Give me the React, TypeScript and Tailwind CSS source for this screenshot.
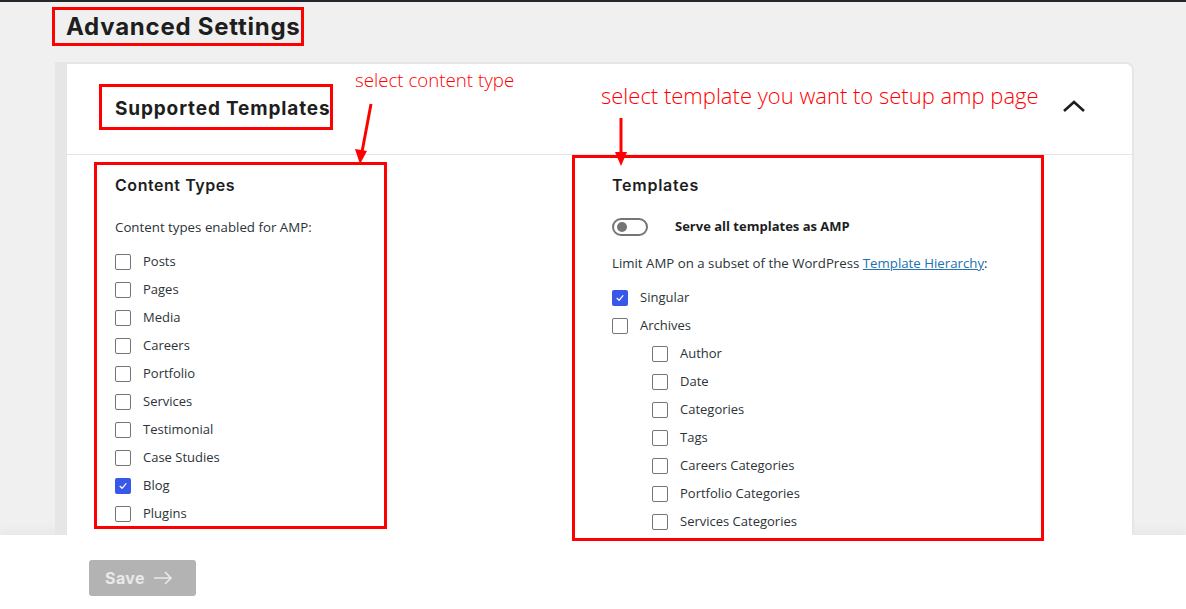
import React from 'react';

const CONTENT_TYPES = [
  { label: 'Posts', checked: false },
  { label: 'Pages', checked: false },
  { label: 'Media', checked: false },
  { label: 'Careers', checked: false },
  { label: 'Portfolio', checked: false },
  { label: 'Services', checked: false },
  { label: 'Testimonial', checked: false },
  { label: 'Case Studies', checked: false },
  { label: 'Blog', checked: true },
  { label: 'Plugins', checked: false },
];

const ARCHIVES = ['Author', 'Date', 'Categories', 'Tags', 'Careers Categories', 'Portfolio Categories', 'Services Categories'];

const HEAD = "font-['Inter',sans-serif]";
const BODY = "font-['Open_Sans','Noto_Sans',sans-serif]";
const NOTE = "font-['Open_Sans',sans-serif] font-light text-[#ff0000]";

function Checkbox({ checked }: { checked: boolean }) {
  if (checked) {
    return (
      <span className="flex h-4 w-4 shrink-0 items-center justify-center rounded-[2px] bg-[#3858e9]">
        <svg width="10" height="10" viewBox="0 0 10 10" fill="none">
          <path d="M2 5.3 L4.1 7.3 L8 2.6" stroke="white" strokeWidth="1.2" strokeLinecap="round" strokeLinejoin="round" />
        </svg>
      </span>
    );
  }
  return <span className="h-4 w-4 shrink-0 rounded-[2px] border-[1.5px] border-[#757575] bg-white" />;
}

function Row({ label, checked = false }: { label: string; checked?: boolean }) {
  return (
    <div className="flex h-[28px] items-center gap-3">
      <Checkbox checked={checked} />
      <span className={`${BODY} text-[13px] text-[#2c3338]`}>{label}</span>
    </div>
  );
}

export default function App() {
  return (
    <div className="relative h-[609px] w-[1186px] overflow-hidden border-t-2 border-[#23282d] bg-[#f0f0f0]">
      <div className="flex h-[533px] flex-col overflow-hidden">
        <h1 className={`${HEAD} pl-[66px] pt-[9px] text-[24px] leading-[32px] font-bold tracking-[0.75px] text-[#1e1e1e]`}>
          Advanced Settings
        </h1>

        {/* Card */}
        <div className="ml-[55px] mr-[52px] mt-[19px] rounded-tr-[8px] bg-[#e6e6e6] pl-[12px] pt-[2px] pr-[2px]">
          <div className="rounded-tr-[6px] bg-white">
            <div className="flex h-[91px] items-center justify-between border-b border-[#e4e4e4] pl-[48px] pr-[46px]">
              <h2 className={`${HEAD} text-[19px] font-bold tracking-[0.85px] text-[#1e1e1e]`}>Supported Templates</h2>
              <svg width="24" height="14" viewBox="0 0 24 14" fill="none" className="mt-[-6px]">
                <path d="M2 12 L12 3 L22 12" stroke="#1e1e1e" strokeWidth="2.6" />
              </svg>
            </div>

            <div className="grid grid-cols-[497px_1fr] pl-[48px] pt-[20px] pb-[40px]">
              {/* Content types */}
              <div>
                <h3 className={`${HEAD} text-[16px] leading-[20px] font-semibold tracking-[0.55px] text-[#1e1e1e]`}>Content Types</h3>
                <p className={`${BODY} mt-[22px] text-[13.3px] leading-[20px] text-[#2c3338]`}>Content types enabled for AMP:</p>
                <div className="mt-[11px] flex flex-col">
                  {CONTENT_TYPES.map((c) => (
                    <Row key={c.label} label={c.label} checked={c.checked} />
                  ))}
                </div>
              </div>

              {/* Templates */}
              <div>
                <h3 className={`${HEAD} text-[16px] leading-[20px] font-semibold tracking-[0.75px] text-[#1e1e1e]`}>Templates</h3>
                <div className="mt-[22px] flex h-[20px] items-center">
                  <span className="flex h-[18px] w-[36px] items-center rounded-full border-2 border-[#757575] pl-[3px]">
                    <span className="h-[10px] w-[10px] rounded-full bg-[#757575]" />
                  </span>
                  <span className={`${BODY} ml-[27px] text-[13px] font-bold text-[#1e1e1e]`}>Serve all templates as AMP</span>
                </div>
                <p className={`${BODY} mt-[16px] text-[13.25px] leading-[20px] text-[#2c3338]`}>
                  Limit AMP on a subset of the WordPress{' '}
                  <a className="text-[#2271b1] underline">Template Hierarchy</a>:
                </p>
                <div className="mt-[11px] flex flex-col">
                  <Row label="Singular" checked />
                  <Row label="Archives" />
                  <div className="flex flex-col pl-[40px]">
                    {ARCHIVES.map((a) => (
                      <Row key={a} label={a} />
                    ))}
                  </div>
                </div>
              </div>
            </div>
          </div>
        </div>
      </div>

      {/* Footer */}
      <div className="flex h-[74px] items-start bg-white pl-[89px] pt-[25px] shadow-[0_-6px_10px_rgba(0,0,0,0.035)]">
        <button className={`${HEAD} flex h-[36px] w-[107px] items-center gap-2 rounded-[3px] bg-[#b3b3b3] pl-[16px] text-[16px] font-bold tracking-[0.4px] text-[#e9e9e9]`}>
          Save
          <svg width="20" height="14" viewBox="0 0 20 14" fill="none">
            <path d="M1 7 H18 M12 1 L18 7 L12 13" stroke="#e9e9e9" strokeWidth="1.6" />
          </svg>
        </button>
      </div>

      {/* Annotations */}
      <div className="absolute left-[52px] top-[5px] h-[39px] w-[252px] border-[3px] border-[#ff0000]" />
      <div className="absolute left-[99px] top-[82px] h-[46px] w-[234px] border-[3px] border-[#ff0000]" />
      <div className="absolute left-[94px] top-[160px] h-[367px] w-[293px] border-[3px] border-[#ff0000]" />
      <div className="absolute left-[572px] top-[153px] h-[386px] w-[472px] border-[3px] border-[#ff0000]" />
      <span className={`${NOTE} absolute left-[355px] top-[64px] text-[18.7px] leading-[28px]`}>select content type</span>
      <span className={`${NOTE} absolute left-[601px] top-[78px] text-[22px] leading-[30px]`}>select template you want to setup amp page</span>
      <svg className="pointer-events-none absolute left-0 top-[-2px]" width="1186" height="609">
        <path d="M371 104 L362 152" stroke="#ff0000" strokeWidth="3" />
        <path d="M355 149 L360 164 L367 151 Z" fill="#ff0000" />
        <path d="M621 118 L621 154" stroke="#ff0000" strokeWidth="3" />
        <path d="M615 152 L621 166 L627 152 Z" fill="#ff0000" />
      </svg>
    </div>
  );
}
